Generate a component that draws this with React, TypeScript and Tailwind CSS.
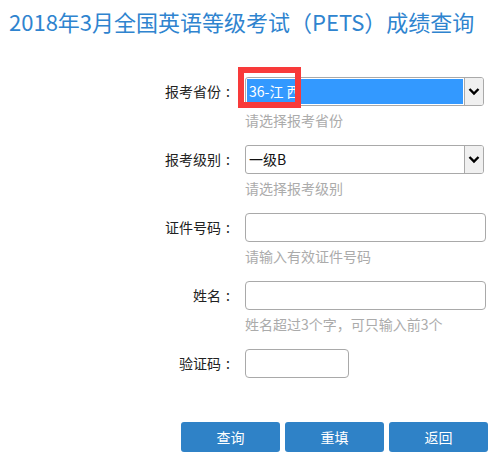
import React from "react";

const font = { fontFamily: '"Noto Sans CJK SC", "Noto Sans", sans-serif' };

function Chevron() {
  return (
    <svg width="12" height="9" viewBox="0 0 12 9">
      <path d="M1.5 2 L6 6.5 L10.5 2" fill="none" stroke="#000" strokeWidth="2.4" />
    </svg>
  );
}

function SelectBox({ value, selected }: { value: string; selected?: boolean }) {
  return (
    <div className="flex h-[29px] w-[239px] rounded-[3px] border border-[#a9a9a9] bg-white overflow-hidden">
      <div className="flex flex-1 items-center p-[1px]">
        <div
          className={
            selected
              ? "flex h-full w-full items-center bg-[#3399ff] pl-[2px] text-[14px] text-white"
              : "flex h-full w-full items-center pl-[2px] text-[14px] text-[#111]"
          }
        >
          {value}
        </div>
      </div>
      <div className="flex w-[19px] items-center justify-center border-l border-[#a9a9a9] bg-[#f0f0f0]">
        <Chevron />
      </div>
    </div>
  );
}

function Row({
  label,
  hint,
  children,
}: {
  label: string;
  hint?: string;
  children: React.ReactNode;
}) {
  return (
    <div className="flex items-start">
      <div className="flex h-[29px] w-[235px] items-center justify-end text-[14px] text-[#222]">
        <span>{label}</span>
        <span className="w-[14px] text-center">:</span>
      </div>
      <div className="ml-[10px] flex flex-col">
        {children}
        {hint && <div className="mt-[4px] text-[14px] leading-[20px] text-[#ababab]">{hint}</div>}
      </div>
    </div>
  );
}

export default function App() {
  return (
    <div className="h-[462px] w-[497px] bg-white overflow-hidden" style={font}>
      <div className="pl-[9px] pt-[6px] text-[22px] leading-[30px] text-[#2f84cf] whitespace-nowrap">
        2018年3月全国英语等级考试（PETS）成绩查询
      </div>
      <div className="mt-[41px] flex flex-col gap-[15px]">
        <Row label="报考省份" hint="请选择报考省份">
          <div className="relative">
            <SelectBox value="36-江 西" selected />
            <div className="absolute left-[-7px] top-[-10px] h-[41px] w-[63px] border-[6px] border-[#f83a3a]" />
          </div>
        </Row>
        <Row label="报考级别" hint="请选择报考级别">
          <SelectBox value="一级B" />
        </Row>
        <Row label="证件号码" hint="请输入有效证件号码">
          <div className="h-[29px] w-[241px] rounded-[4px] border border-[#a9a9a9] bg-white" />
        </Row>
        <Row label="姓名" hint="姓名超过3个字，可只输入前3个">
          <div className="h-[29px] w-[241px] rounded-[4px] border border-[#a9a9a9] bg-white" />
        </Row>
        <Row label="验证码">
          <div className="h-[29px] w-[104px] rounded-[4px] border border-[#a9a9a9] bg-white" />
        </Row>
      </div>
      <div className="mt-[44px] flex gap-[5px] pl-[181px]">
        {["查询", "重填", "返回"].map((t) => (
          <button
            key={t}
            className="flex h-[30px] w-[99px] items-center justify-center rounded-[3px] bg-[#2f82c7] text-[14px] text-white"
          >
            {t}
          </button>
        ))}
      </div>
    </div>
  );
}
